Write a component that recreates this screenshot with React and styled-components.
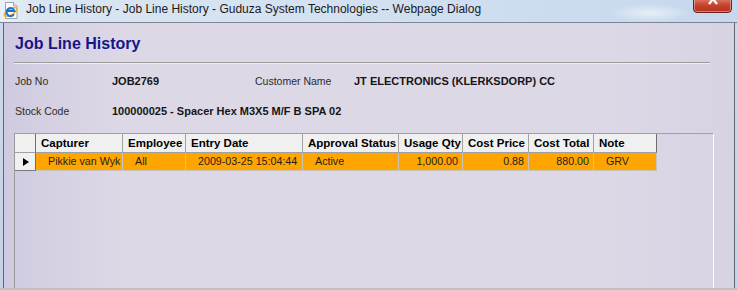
import React from "react";
import styled, { createGlobalStyle } from "styled-components";

const GlobalStyle = createGlobalStyle`
  html, body {
    margin: 0;
    padding: 0;
  }
  body {
    width: 737px;
    height: 290px;
    overflow: hidden;
    background: #c0c0c0;
    font-family: "Liberation Sans", Arial, sans-serif;
  }
`;

const Window = styled.div`
  width: 737px;
  height: 290px;
  display: flex;
  flex-direction: column;
  overflow: hidden;
  background: #cbd8e9;
`;

const TitleBar = styled.div`
  height: 22px;
  flex: none;
  display: flex;
  align-items: flex-start;
  border-bottom: 1px solid #7c8694;
  background: radial-gradient(ellipse 40px 9px at 650px 13px, rgba(255, 255, 255, 0.55), rgba(255, 255, 255, 0) 100%),
    linear-gradient(to right, #eaf0f7 0, #d9e5f2 40px, #d3e1f1 45%, #c6d8ee 100%);
`;

const TitleText = styled.span`
  flex: 1;
  padding: 1px 0 0 6px;
  font-size: 12px;
  line-height: 16px;
  color: #1b1b1b;
  white-space: nowrap;
`;

const CloseButton = styled.div`
  width: 39px;
  height: 18px;
  margin: -5px 5px 0 0;
  box-sizing: border-box;
  border: 1px solid #6e2216;
  border-radius: 4px;
  background: linear-gradient(to bottom, #e8a090 0, #d46a56 30%, #c2412c 60%, #b8321f 100%);
  box-shadow: inset 0 0 0 1px rgba(255, 220, 210, 0.45);
  display: flex;
  justify-content: center;
  align-items: flex-start;
`;

const Body = styled.div`
  flex: 1;
  display: flex;
  min-height: 0;
`;

const Frame = styled.div`
  flex: none;
  width: ${(p) => p.$w}px;
  background: linear-gradient(to bottom, #cdd9e9, #c3d2e6);
`;

const Content = styled.div`
  flex: 1;
  display: flex;
  flex-direction: column;
  min-width: 0;
  padding: 12px 20px 0 10px;
  border-left: 1px solid #5f6672;
  border-right: 1px solid #5f6672;
  background: linear-gradient(to right, #cfcadf 0, #d4d0e2 40px, #dcd8e6 120px, #dcd8e6 82%, #d7d3e2 100%);
`;

const Heading = styled.h1`
  margin: 0 0 0 1px;
  font-size: 16px;
  line-height: 18px;
  font-weight: bold;
  color: #16168a;
`;

const Rule = styled.div`
  margin: 9px 4px 0 0;
  border-top: 1px solid #9c9c9c;
  border-bottom: 1px solid #eeedf3;
`;

const InfoGrid = styled.div`
  display: grid;
  grid-template-columns: 97px 143px 99px 1fr;
  row-gap: 16px;
  margin: 10px 0 0 1px;
  align-items: baseline;
`;

const Label = styled.span`
  font-size: 10.5px;
  line-height: 14px;
  color: #2b2b2b;
  white-space: nowrap;
`;

const Value = styled.span`
  font-size: 11px;
  line-height: 14px;
  font-weight: bold;
  color: #151515;
  white-space: nowrap;
`;

const GridFrame = styled.div`
  flex: 1;
  margin-top: 15px;
  border-top: 1px solid #a0a0a0;
  border-left: 1px solid #9a9a9a;
  border-right: 1px solid #ffffff;
`;

const DataGrid = styled.div`
  display: grid;
  grid-template-columns: 21px 87px 63px 117px 96px 64px 66px 65px 63px;
  width: max-content;
`;

const HeadCell = styled.div`
  height: 19px;
  box-sizing: border-box;
  padding-left: 5px;
  background: #f0f0f0;
  border-right: 1px solid ${(p) => (p.$edge ? "#6e6e6e" : "#a3a3a3")};
  border-bottom: 1px solid #a0a0a0;
  font-size: 11.5px;
  line-height: 18px;
  font-weight: bold;
  color: #000;
  white-space: nowrap;
  overflow: hidden;
`;

const RowHead = styled.div`
  height: ${(p) => (p.$top ? 19 : 18)}px;
  box-sizing: border-box;
  background: #f0f0f0;
  border-right: 1px solid #6e6e6e;
  border-bottom: 1px solid ${(p) => (p.$top ? "#a0a0a0" : "#7a7a7a")};
  display: flex;
  align-items: center;
  justify-content: center;
`;

const Pointer = styled.span`
  width: 0;
  height: 0;
  margin-left: 1px;
  border-left: 6px solid #000;
  border-top: 4px solid transparent;
  border-bottom: 4px solid transparent;
`;

const Cell = styled.div`
  height: 18px;
  box-sizing: border-box;
  padding: ${(p) => (p.$num ? "0 4px 0 0" : "0 0 0 12px")};
  text-align: ${(p) => (p.$num ? "right" : "left")};
  background: #ffa500;
  border-right: 1px solid #c9c3b8;
  border-bottom: 1px solid #c9c3b8;
  font-size: 10.7px;
  line-height: 17px;
  color: #1e1e1e;
  white-space: nowrap;
  overflow: hidden;
`;

const BottomEdge = styled.div`
  height: 2px;
  flex: none;
  background: #c0c0c0;
`;

function IeIcon() {
  return (
    <svg width="18" height="19" viewBox="0 0 18 19" style={{ margin: "1px 0 0 2px", flex: "none" }}>
      <path d="M3.5 1.5h8l3.5 3.5v12.5h-11.5z" fill="#fdfdfd" stroke="#9aa3ae" />
      <path d="M11.5 1.5v3.5h3.5" fill="#e8ecf0" stroke="#9aa3ae" />
      <ellipse cx="8.5" cy="11" rx="7" ry="3" fill="none" stroke="#f0b020" strokeWidth="1.4" transform="rotate(-30 8.5 11)" />
      <path d="M12 13.2a4 4 0 1 1 0.4-3.2h-7" fill="none" stroke="#1f6fd0" strokeWidth="2" />
    </svg>
  );
}

const columns = [
  { title: "Capturer", value: "Pikkie van Wyk" },
  { title: "Employee", value: "All" },
  { title: "Entry Date", value: "2009-03-25 15:04:44" },
  { title: "Approval Status", value: "Active" },
  { title: "Usage Qty", value: "1,000.00", num: true },
  { title: "Cost Price", value: "0.88", num: true },
  { title: "Cost Total", value: "880.00", num: true },
  { title: "Note", value: "GRV" },
];

export default function App() {
  return (
    <>
      <GlobalStyle />
      <Window>
        <TitleBar>
          <IeIcon />
          <TitleText>
            Job Line History - Job Line History - Guduza System Technologies -- Webpage Dialog
          </TitleText>
          <CloseButton>
            <svg width="12" height="9" viewBox="0 0 12 9">
              <path d="M2 -2l8 10M10 -2l-8 10" stroke="#fff" strokeWidth="2.2" />
            </svg>
          </CloseButton>
        </TitleBar>
        <Body>
          <Frame $w={3} />
          <Content>
            <Heading>Job Line History</Heading>
            <Rule />
            <InfoGrid>
              <Label>Job No</Label>
              <Value>JOB2769</Value>
              <Label>Customer Name</Label>
              <Value>JT ELECTRONICS (KLERKSDORP) CC</Value>
              <Label>Stock Code</Label>
              <Value style={{ gridColumn: "2 / 5" }}>100000025 - Spacer Hex M3X5 M/F B SPA 02</Value>
            </InfoGrid>
            <GridFrame>
              <DataGrid>
                <RowHead $top />
                {columns.map((c, i) => (
                  <HeadCell key={c.title} $edge={i === columns.length - 1}>
                    {c.title}
                  </HeadCell>
                ))}
                <RowHead>
                  <Pointer />
                </RowHead>
                {columns.map((c) => (
                  <Cell key={c.title} $num={c.num}>
                    {c.value}
                  </Cell>
                ))}
              </DataGrid>
            </GridFrame>
          </Content>
          <Frame $w={2} />
        </Body>
        <BottomEdge />
      </Window>
    </>
  );
}
